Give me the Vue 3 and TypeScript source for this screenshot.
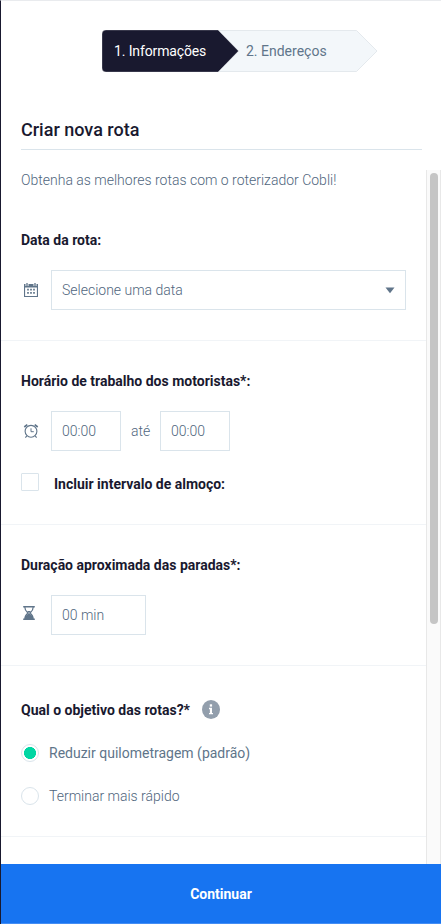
<script setup lang="ts">
import { ref } from 'vue'

type Goal = 'distance' | 'time'

interface GoalOption {
  value: Goal
  label: string
}

const goal = ref<Goal>('distance')
const includeLunch = ref(false)
const goals: GoalOption[] = [
  { value: 'distance', label: 'Reduzir quilometragem (padrão)' },
  { value: 'time', label: 'Terminar mais rápido' },
]
</script>

<template>
  <main class="panel">
    <header class="header">
      <nav class="stepper">
        <svg class="stepper-shape" width="278" height="44" viewBox="0 0 278 44">
          <path d="M112 1.500H255.500L276 22L255.500 42.500H112Z" fill="#f3f7fa" stroke="#e4e9ed" />
          <path d="M5 1H117L137.500 22L117 43H5Q1 43 1 39V5Q1 1 5 1Z" fill="#19192f" stroke="#fff" stroke-opacity=".35" stroke-width=".8" />
        </svg>
        <span class="step current">1. Informações</span>
        <span class="step next">2. Endereços</span>
      </nav>
      <h1 class="title">Criar nova rota</h1>
    </header>

    <div class="body">
      <form class="form" @submit.prevent>
        <section class="section intro">
          <p class="lead">Obtenha as melhores rotas com o roterizador Cobli!</p>
          <h2 class="label">Data da rota:</h2>
          <div class="row">
            <svg class="icon" width="20" height="20" viewBox="0 0 20 20">
              <path d="M3 4H17V17H3ZM4.100 7.500V15.900H15.900V7.500Z" fill="#60758a" fill-rule="evenodd" />
              <path d="M6 3V6M14 3V6" stroke="#fff" stroke-width="3" />
              <path d="M6 3V6.300M14 3V6.300" stroke="#60758a" stroke-width="1.300" />
              <path d="M6 9.700H8M9 9.700H11M12 9.700H14M6 12.900H8M9 12.900H11M12 12.900H14" stroke="#60758a" stroke-opacity=".85" stroke-width="1.800" />
            </svg>
            <div class="field select">
              <span>Selecione uma data</span>
              <svg width="10" height="7" viewBox="0 0 10 7"><path d="M.5 .5H9.500L5 6.300Z" fill="#60758a" /></svg>
            </div>
          </div>
        </section>

        <section class="section">
          <h2 class="label">Horário de trabalho dos motoristas*:</h2>
          <div class="row">
            <svg class="icon" width="20" height="20" viewBox="0 0 20 20" fill="none" stroke="#60758a">
              <circle cx="10" cy="10.300" r="5.900" stroke-width="1.100" />
              <path d="M10 7.300V10.700H12.800" stroke-width="1" />
              <path d="M3.300 6L6.300 3.600M16.700 6L13.700 3.600" stroke-width="1.700" />
              <path d="M5.800 14.800L4.400 16.600M14.200 14.800L15.600 16.600" stroke-width="1.100" />
            </svg>
            <div class="field time">00:00</div>
            <span class="until">até</span>
            <div class="field time">00:00</div>
          </div>
          <label class="lunch">
            <input v-model="includeLunch" class="checkbox" type="checkbox" />
            <span>Incluir intervalo de almoço:</span>
          </label>
        </section>

        <section class="section">
          <h2 class="label">Duração aproximada das paradas*:</h2>
          <div class="row">
            <svg class="icon" width="20" height="20" viewBox="0 0 20 20">
              <path d="M2.200 1.800H13.800M2.200 14.300H13.800" stroke="#60758a" stroke-width="1.500" />
              <path d="M3.800 2C3.800 5.500 5 6.300 7 8C5 9.700 3.800 10.800 3.800 14.200M12.200 2C12.200 5.500 11 6.300 9 8C11 9.700 12.200 10.800 12.200 14.200" fill="none" stroke="#60758a" stroke-width="1.200" />
              <path d="M6 6H10L8 8ZM8 8L12 11.800V14H4V11.800Z" fill="#60758a" />
            </svg>
            <div class="field duration">00 min</div>
          </div>
        </section>

        <section class="section goal">
          <h2 class="label">
            Qual o objetivo das rotas?*
            <svg class="info" width="20" height="20" viewBox="0 0 20 20">
              <ellipse cx="10" cy="9.500" rx="9" ry="9.500" fill="#929eac" />
              <path d="M8 7.800H11V14H8.900V9.200H8ZM8 12.900H12V14.300H8Z" fill="#fff" />
              <rect x="8.800" y="4.300" width="2.300" height="2.300" fill="#fff" />
            </svg>
          </h2>
          <label v-for="option in goals" :key="option.value" class="option" :class="{ selected: goal === option.value }">
            <input v-model="goal" class="radio" type="radio" name="goal" :value="option.value" />
            <span>{{ option.label }}</span>
          </label>
        </section>
      </form>
      <div class="track"><div class="thumb"></div></div>
    </div>
    <button class="continue" type="button">Continuar</button>
  </main>
</template>

<style>
body { margin: 0; background: #fff; }
</style>

<style scoped>
* { box-sizing: border-box; }
.panel {
  display: flex;
  flex-direction: column;
  width: 441px;
  height: 924px;
  overflow: hidden;
  border-left: 1px solid #19192f;
  border-top: 1px solid #e9ebee;
  background: #fff;
  color: #50667d;
  font: 300 14px/20px Roboto, sans-serif;
}
.header { height: 169px; flex: none; padding: 28px 19px 0 20px; }
.stepper {
  position: relative;
  display: flex;
  width: 278px;
  height: 44px;
  margin-left: 80px;
  align-items: center;
  font-weight: 400;
}
.stepper-shape { position: absolute; inset: 0; }
.step { position: relative; white-space: nowrap; }
.current { width: 132px; padding-left: 13px; color: #fff; letter-spacing: -.13px; }
.next { padding-left: 13px; color: #60758a; }
.title {
  height: 32px;
  margin: 45px 0 0;
  border-bottom: 1px solid #dae4eb;
  color: #19192f;
  font-size: 18px;
  font-weight: 500;
  line-height: 24px;
}
.body { display: flex; height: 694px; flex: none; overflow: hidden; }
.form { flex: 1; }
.section { padding: 30px 20px; border-bottom: 1px solid #f1f4f7; }
.intro { padding-top: 0; }
.lead { margin: 0 0 40px; }
.label { display: flex; align-items: center; margin: 0; color: #19192f; font-size: 14px; font-weight: 700; line-height: 20px; }
.row { display: flex; align-items: center; margin-top: 20px; }
.icon { flex: none; margin-right: 10px; }
.field {
  display: flex;
  align-items: center;
  height: 40px;
  padding: 0 10px;
  border: 1px solid #dae4eb;
}
.select { width: 355px; justify-content: space-between; }
.time { width: 70px; }
.until { width: 39px; padding-left: 10px; }
.duration { width: 95px; }
.lunch { display: flex; align-items: center; margin: 21px 0 1px; height: 21px; color: #19192f; font-weight: 700; }
.lunch span { padding-top: 2px; }
.checkbox, .radio { appearance: none; flex: none; width: 18px; height: 18px; margin: 0; border: 1px solid #dae4eb; background: #fff; }
.checkbox { margin: -1px 15px 0 0; border-radius: 1px; }
.checkbox:checked { background: #00d6a3; }
.goal { padding-top: 34px; padding-bottom: 30px; }
.info { margin-left: 11px; }
.option { display: flex; align-items: center; height: 20px; margin-top: 23px; }
.radio { margin-right: 10px; border-radius: 50%; }
.radio:checked { background: radial-gradient(circle, #00d6a3 0 5.700px, #fff 6.300px); }
.selected { color: #60758a; font-weight: 400; }
.track { width: 15px; height: 694px; padding: 3px 2px 0 3px; border: solid #e8e8e8; border-width: 0 1px; background: #fafafa; }
.thumb { width: 8px; height: 451px; border-radius: 4px; background: #c5c5c5; }
.continue {
  flex: none;
  height: 60px;
  border: 0;
  border-bottom: 1px solid #438df4;
  background: #1774f1;
  color: #fff;
  font: 700 14px/20px Roboto, sans-serif;
}
</style>
